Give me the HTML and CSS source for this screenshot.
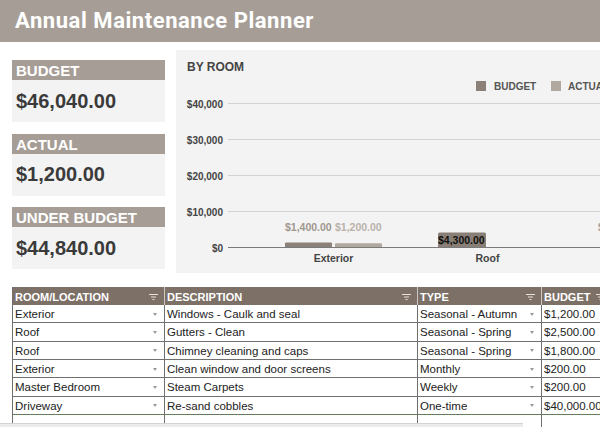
FILE: index.html
```html
<!DOCTYPE html>
<html lang="en">
<head>
<meta charset="utf-8">
<title>Annual Maintenance Planner</title>
<link rel="stylesheet" href="styles.css">
</head>
<body>
<header class="topbar"><h1 class="title">Annual Maintenance Planner</h1></header>
<main class="dash">
  <section class="cards">
    <div class="card"><div class="card-label">BUDGET</div><div class="card-value">$46,040.00</div></div>
    <div class="card"><div class="card-label">ACTUAL</div><div class="card-value">$1,200.00</div></div>
    <div class="card"><div class="card-label">UNDER BUDGET</div><div class="card-value">$44,840.00</div></div>
  </section>
  <section class="chart">
    <svg class="chart-svg" width="440" height="223" viewBox="0 0 440 223">
      <text class="c-title" x="11" y="21">BY ROOM</text>
      <rect x="300" y="31" width="10" height="10" fill="#8c8178"/>
      <text class="c-legend" x="318" y="39.5">BUDGET</text>
      <rect x="375" y="31" width="10" height="10" fill="#b1a89f"/>
      <text class="c-legend" x="392" y="39.5">ACTUAL</text>
      <g stroke="#d2d2d2" stroke-width="1">
        <line x1="52" y1="53.5" x2="440" y2="53.5"/>
        <line x1="52" y1="89.5" x2="440" y2="89.5"/>
        <line x1="52" y1="125.5" x2="440" y2="125.5"/>
        <line x1="52" y1="161.5" x2="440" y2="161.5"/>
      </g>
      <g class="c-axis" text-anchor="end">
        <text x="47" y="57.5">$40,000</text>
        <text x="47" y="93.5">$30,000</text>
        <text x="47" y="129.5">$20,000</text>
        <text x="47" y="165.5">$10,000</text>
        <text x="47" y="201.5">$0</text>
      </g>
      <rect x="109" y="192.5" width="47" height="5.5" rx="1" fill="#8c8178"/>
      <rect x="159" y="193.3" width="47" height="4.7" rx="1" fill="#b1a89f"/>
      <rect x="262" y="182.5" width="48" height="15.5" rx="1.5" fill="#8a7f76"/>
      <line x1="52" y1="197.5" x2="440" y2="197.5" stroke="#7a7a7a" stroke-width="1.2"/>
      <text class="c-val c-budget" x="109" y="181">$1,400.00</text>
      <text class="c-val c-actual" x="159" y="181">$1,200.00</text>
      <text class="c-val c-dark" x="262" y="194">$4,300.00</text>
      <text class="c-val c-budget" x="422" y="181">$</text>
      <g class="c-cat" text-anchor="middle">
        <text x="157.5" y="211.5">Exterior</text>
        <text x="311.5" y="211.5">Roof</text>
      </g>
    </svg>
  </section>
</main>
<section class="sheet">
  <div class="th"><span>ROOM/LOCATION</span><svg class="filt" width="9" height="6" viewBox="0 0 9 6"><path d="M0 0.5h9M2 3h5M3.5 5.5h2" stroke="#e6e1dc" stroke-width="1"/></svg></div>
  <div class="th"><span>DESCRIPTION</span><svg class="filt" width="9" height="6" viewBox="0 0 9 6"><path d="M0 0.5h9M2 3h5M3.5 5.5h2" stroke="#e6e1dc" stroke-width="1"/></svg></div>
  <div class="th"><span>TYPE</span><svg class="filt" width="9" height="6" viewBox="0 0 9 6"><path d="M0 0.5h9M2 3h5M3.5 5.5h2" stroke="#e6e1dc" stroke-width="1"/></svg></div>
  <div class="th th-last"><span>BUDGET</span><svg class="filt" width="9" height="6" viewBox="0 0 9 6"><path d="M0 0.5h9M2 3h5M3.5 5.5h2" stroke="#e6e1dc" stroke-width="1"/></svg></div>

  <div class="td dd">Exterior</div><div class="td">Windows - Caulk and seal</div><div class="td dd">Seasonal - Autumn</div><div class="td">$1,200.00</div>
  <div class="td dd">Roof</div><div class="td">Gutters - Clean</div><div class="td dd">Seasonal - Spring</div><div class="td">$2,500.00</div>
  <div class="td dd">Roof</div><div class="td">Chimney cleaning and caps</div><div class="td dd">Seasonal - Spring</div><div class="td">$1,800.00</div>
  <div class="td dd">Exterior</div><div class="td">Clean window and door screens</div><div class="td dd">Monthly</div><div class="td">$200.00</div>
  <div class="td dd">Master Bedroom</div><div class="td">Steam Carpets</div><div class="td dd">Weekly</div><div class="td">$200.00</div>
  <div class="td dd last">Driveway</div><div class="td last">Re-sand cobbles</div><div class="td dd last">One-time</div><div class="td last">$40,000.00</div>
  <div class="td dd"></div><div class="td"></div><div class="td dd"></div><div class="td"></div>
</section>
<div class="hscroll"></div>
</body>
</html>
```
FILE: styles.css
```css
html, body {
  margin: 0;
  padding: 0;
}
body {
  width: 600px;
  height: 427px;
  overflow: hidden;
  background: #ffffff;
  font-family: "Liberation Sans", Arial, sans-serif;
  color: #222;
}
.topbar {
  height: 42px;
  background: #a69e96;
  display: flex;
  align-items: center;
  padding-left: 15px;
}
.title {
  margin: 0;
  font: 700 22px/1 Roboto, "Liberation Sans", sans-serif;
  color: #ffffff;
  letter-spacing: 0.55px;
}
.dash {
  display: flex;
  padding-top: 8px;
  height: 223px;
}
.cards {
  flex: none;
  width: 153px;
  margin-left: 12px;
  padding-top: 10px;
  display: flex;
  flex-direction: column;
  gap: 11.5px;
}
.card {
  background: #f3f3f3;
}
.card-label {
  height: 20px;
  line-height: 21px;
  background: #a69e96;
  color: #ffffff;
  font-weight: 700;
  font-size: 15px;
  padding-left: 4px;
}
.card-value {
  height: 42px;
  display: flex;
  align-items: center;
  padding-left: 4px;
  font-weight: 700;
  font-size: 20px;
  color: #3a3a3a;
}
.chart {
  flex: none;
  margin-left: 11px;
  width: 440px;
  height: 223px;
  background: #f3f3f3;
}
.chart-svg {
  display: block;
  font-family: "Liberation Sans", Arial, sans-serif;
}
.c-title {
  font-size: 12px;
  font-weight: 700;
  fill: #444;
}
.c-legend {
  font-size: 10px;
  font-weight: 700;
  fill: #555;
}
.c-axis {
  font-size: 10px;
  font-weight: 700;
  fill: #444;
}
.c-val {
  font-size: 10.5px;
  font-weight: 700;
}
.c-budget { fill: #a0978f; }
.c-actual { fill: #bab2aa; }
.c-dark { fill: #111; }
.c-cat {
  font-size: 10.5px;
  font-weight: 700;
  fill: #444;
}
.sheet {
  margin: 14px 0 0 12px;
  display: grid;
  grid-template-columns: 152px 253px 124px 66px;
  grid-template-rows: 18px;
  grid-auto-rows: 18.33px;
  border-left: 1px solid #6f6f6f;
  width: max-content;
}
.th {
  box-sizing: border-box;
  background: #7c7067;
  color: #ffffff;
  font-weight: 700;
  font-size: 11px;
  display: flex;
  align-items: center;
  justify-content: space-between;
  padding: 1px 6px 0 2px;
  border-right: 1px solid #cdc7c1;
}
.th-last {
  padding-right: 2px;
}
.filt {
  display: block;
  flex: none;
}
.td {
  box-sizing: border-box;
  font-size: 11.5px;
  color: #222;
  display: flex;
  align-items: center;
  justify-content: space-between;
  padding: 1px 7px 0 2px;
  border-right: 1px solid #6f6f6f;
  border-bottom: 1px solid #6f6f6f;
  white-space: nowrap;
  overflow: hidden;
  background: #fff;
}
.dd::after {
  content: "";
  flex: none;
  width: 0;
  height: 0;
  border-left: 2.5px solid transparent;
  border-right: 2.5px solid transparent;
  border-top: 3px solid #9a9a9a;
}
.last {
  border-bottom-color: #667d5c;
}
.hscroll {
  position: fixed;
  left: 0;
  bottom: 0;
  width: 523px;
  height: 3px;
  background: #ececec;
  border-top: 1px solid #d3d3d3;
}
```
